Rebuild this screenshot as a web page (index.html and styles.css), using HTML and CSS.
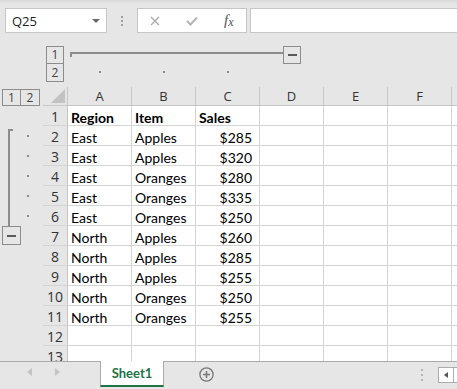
FILE: index.html
```html
<!DOCTYPE html>
<html lang="en">
<head>
    <meta charset="UTF-8">
    <meta name="viewport" content="width=device-width, initial-scale=1.0">
    <title>Sheet1</title>
    <link rel="stylesheet" href="styles.css">
</head>
<body>
<div class="app">

    <div class="toolbar">
        <div class="namebox"><span>Q25</span><span class="caret"></span></div>
        <div class="grip"><i></i><i></i><i></i></div>
        <div class="fxbox">
            <svg width="10" height="10" viewBox="0 0 10 10"><path d="M1 1L9 9M9 1L1 9" stroke="#a8a8a8" stroke-width="1.3" fill="none"/></svg>
            <svg width="12" height="10" viewBox="0 0 12 10"><path d="M1 5L4.5 8.5L11 1.5" stroke="#b4b4b4" stroke-width="2" fill="none"/></svg>
            <span class="fx">f<span class="fx-x">x</span></span>
        </div>
        <div class="formula"></div>
    </div>

    <div class="outline-top">
        <div class="lvl top1">1</div>
        <div class="lvl top2">2</div>
        <div class="bar"><span class="line"></span><span class="collapse"><i></i></span></div>
        <span class="dot ca"></span>
        <span class="dot cb"></span>
        <span class="dot cc"></span>
    </div>

    <div class="sheet">
        <div class="row head">
            <div class="ol"><span class="lvl side">1</span><span class="lvl side two">2</span></div>
            <div class="rh corner"><span class="tri"></span></div>
            <div class="ch">A</div><div class="ch">B</div><div class="ch">C</div><div class="ch">D</div><div class="ch">E</div><div class="ch">F</div><div class="ch"></div>
        </div>
        <div class="row bold">
            <div class="ol"></div><div class="rh">1</div>
            <div class="c">Region</div><div class="c">Item</div><div class="c">Sales</div><div class="c"></div><div class="c"></div><div class="c"></div><div class="c"></div>
        </div>
        <div class="row">
            <div class="ol"><span class="brk first"></span><span class="dot"></span></div><div class="rh">2</div>
            <div class="c">East</div><div class="c">Apples</div><div class="c num">$285</div><div class="c"></div><div class="c"></div><div class="c"></div><div class="c"></div>
        </div>
        <div class="row">
            <div class="ol"><span class="brk"></span><span class="dot"></span></div><div class="rh">3</div>
            <div class="c">East</div><div class="c">Apples</div><div class="c num">$320</div><div class="c"></div><div class="c"></div><div class="c"></div><div class="c"></div>
        </div>
        <div class="row">
            <div class="ol"><span class="brk"></span><span class="dot"></span></div><div class="rh">4</div>
            <div class="c">East</div><div class="c">Oranges</div><div class="c num">$280</div><div class="c"></div><div class="c"></div><div class="c"></div><div class="c"></div>
        </div>
        <div class="row">
            <div class="ol"><span class="brk"></span><span class="dot"></span></div><div class="rh">5</div>
            <div class="c">East</div><div class="c">Oranges</div><div class="c num">$335</div><div class="c"></div><div class="c"></div><div class="c"></div><div class="c"></div>
        </div>
        <div class="row">
            <div class="ol"><span class="brk"></span><span class="dot"></span></div><div class="rh">6</div>
            <div class="c">East</div><div class="c">Oranges</div><div class="c num">$250</div><div class="c"></div><div class="c"></div><div class="c"></div><div class="c"></div>
        </div>
        <div class="row">
            <div class="ol"><span class="collapse side"><i></i></span></div><div class="rh">7</div>
            <div class="c">North</div><div class="c">Apples</div><div class="c num">$260</div><div class="c"></div><div class="c"></div><div class="c"></div><div class="c"></div>
        </div>
        <div class="row">
            <div class="ol"></div><div class="rh">8</div>
            <div class="c">North</div><div class="c">Apples</div><div class="c num">$285</div><div class="c"></div><div class="c"></div><div class="c"></div><div class="c"></div>
        </div>
        <div class="row">
            <div class="ol"></div><div class="rh">9</div>
            <div class="c">North</div><div class="c">Apples</div><div class="c num">$255</div><div class="c"></div><div class="c"></div><div class="c"></div><div class="c"></div>
        </div>
        <div class="row">
            <div class="ol"></div><div class="rh">10</div>
            <div class="c">North</div><div class="c">Oranges</div><div class="c num">$250</div><div class="c"></div><div class="c"></div><div class="c"></div><div class="c"></div>
        </div>
        <div class="row">
            <div class="ol"></div><div class="rh">11</div>
            <div class="c">North</div><div class="c">Oranges</div><div class="c num">$255</div><div class="c"></div><div class="c"></div><div class="c"></div><div class="c"></div>
        </div>
        <div class="row">
            <div class="ol"></div><div class="rh">12</div>
            <div class="c"></div><div class="c"></div><div class="c"></div><div class="c"></div><div class="c"></div><div class="c"></div><div class="c"></div>
        </div>
        <div class="row">
            <div class="ol"></div><div class="rh">13</div>
            <div class="c"></div><div class="c"></div><div class="c"></div><div class="c"></div><div class="c"></div><div class="c"></div><div class="c"></div>
        </div>
    </div>

    <div class="tabs">
        <div class="nav"><span class="arr left"></span><span class="arr right"></span></div>
        <div class="tab">Sheet1</div>
        <svg class="add" width="15" height="15" viewBox="0 0 15 15">
            <circle cx="7.5" cy="7.5" r="6.6" stroke="#767676" stroke-width="1.3" fill="none"/>
            <path d="M7.5 4v7M4 7.5h7" stroke="#767676" stroke-width="1.5"/>
        </svg>
        <div class="grip dim"><i></i><i></i><i></i></div>
        <div class="sbtn"><span class="arr back"></span></div>
        <div class="sbtn next"></div>
    </div>

</div>
</body>
</html>
```

FILE: styles.css
```css
*{
    margin: 0;
    padding: 0;
    box-sizing: border-box;
}

body{
    background-color: #e6e6e6;
    font-family: "Open Sans", "Liberation Sans", sans-serif;
    overflow: hidden;
}

.app{
    width: 457px;
    height: 389px;
    display: flex;
    flex-direction: column;
    overflow: hidden;
}

/* formula bar */
.toolbar{
    height: 40px;
    flex: none;
    display: flex;
    align-items: flex-start;
    padding: 8px 0 0 5px;
    background: linear-gradient(#d9d9d9, #e6e6e6 4px);
}

.namebox{
    width: 102px;
    height: 25px;
    flex: none;
    display: flex;
    align-items: center;
    justify-content: space-between;
    padding: 0 6px 0 6px;
    background-color: #fff;
    border: 1px solid #c6c6c6;
    font-size: 13px;
    color: #222;
}

.caret{
    width: 0;
    height: 0;
    border-left: 4px solid transparent;
    border-right: 4px solid transparent;
    border-top: 4px solid #6a6a6a;
}

.grip{
    width: 30px;
    height: 25px;
    flex: none;
    display: flex;
    flex-direction: column;
    align-items: center;
    justify-content: center;
    gap: 2px;
}

.grip i{
    display: block;
    width: 2px;
    height: 2px;
    background-color: #a0a0a0;
}

.fxbox{
    width: 110px;
    height: 25px;
    flex: none;
    display: flex;
    align-items: center;
    gap: 26px;
    padding-left: 12px;
    background-color: #fff;
    border: 1px solid #c6c6c6;
}

.fx{
    font-family: "Liberation Serif", serif;
    font-style: italic;
    font-size: 15px;
    color: #555;
    line-height: 1;
}

.fx-x{
    font-size: 12px;
    position: relative;
    top: 1px;
}

.formula{
    flex: 1;
    height: 25px;
    margin-left: 3px;
    background-color: #fff;
    border: 1px solid #c6c6c6;
    border-right: none;
}

/* outline above the columns */
.outline-top{
    height: 47px;
    flex: none;
    display: grid;
    grid-template-columns: 43px 25px repeat(7, 64px);
    grid-template-rows: 18px 18px;
    padding-top: 6px;
}

.lvl{
    display: flex;
    align-items: center;
    justify-content: center;
    border: 1px solid #8c8c8c;
    font-size: 12px;
    color: #444;
    line-height: 1;
}

.top1{
    grid-column: 2;
    grid-row: 1;
    width: 18px;
    margin-left: 3px;
}

.top2{
    grid-column: 2;
    grid-row: 2;
    width: 18px;
    margin-left: 3px;
    border-top: none;
}

.bar{
    grid-column: 3 / 7;
    grid-row: 1;
    display: flex;
    align-items: flex-start;
}

.line{
    width: 213px;
    height: 5px;
    margin: 6px 0 0 2px;
    border-top: 2px solid #8c8c8c;
    border-left: 2px solid #8c8c8c;
}

.collapse{
    width: 18px;
    height: 18px;
    flex: none;
    display: flex;
    align-items: center;
    justify-content: center;
    border: 1px solid #8c8c8c;
}

.collapse i{
    display: block;
    width: 9px;
    height: 2px;
    background-color: #595959;
}

.dot{
    display: block;
    width: 2px;
    height: 2px;
    background-color: #8c8c8c;
}

.outline-top .dot{
    grid-row: 2;
    justify-self: center;
    align-self: start;
    margin-top: 7px;
}

.ca{ grid-column: 3; }
.cb{ grid-column: 4; }
.cc{ grid-column: 5; }

/* grid */
.sheet{
    height: 274px;
    flex: none;
    overflow: hidden;
}

.row{
    display: grid;
    grid-template-columns: 43px 25px repeat(7, 64px);
    height: 20px;
}

.row.head{
    height: 19px;
}

.ol{
    display: flex;
    align-items: center;
}

.side{
    width: 19px;
    height: 17px;
    margin-top: 2px;
    align-self: flex-start;
}

.lvl.side{
    margin-left: 2px;
}

.lvl.two{
    margin-left: 0;
    border-left: none;
}

.collapse.side{
    margin-left: 2px;
    margin-top: 0;
    height: 19px;
}

.brk{
    width: 5px;
    align-self: stretch;
    margin-left: 8px;
    border-left: 2px solid #8c8c8c;
}

.brk.first{
    margin-top: 3px;
    border-top: 2px solid #8c8c8c;
}

.ol .dot{
    margin-left: 14px;
}

.rh{
    border-right: 1px solid #c6c6c6;
    border-bottom: 1px solid #d4d4d4;
    text-align: center;
    font-size: 14px;
    color: #333;
    padding-top: 3px;
    line-height: 16px;
}

.corner{
    display: flex;
    align-items: flex-end;
    justify-content: flex-end;
    padding: 0 2px 2px 0;
    border-bottom: 1px solid #c6c6c6;
}

.tri{
    width: 0;
    height: 0;
    border-left: 14px solid transparent;
    border-bottom: 14px solid #c2c2c2;
}

.ch{
    border-right: 1px solid #c6c6c6;
    border-bottom: 1px solid #c6c6c6;
    text-align: center;
    font-size: 13px;
    color: #333;
    padding-top: 2px;
    line-height: 15px;
}

.c{
    background-color: #fff;
    border-right: 1px solid #d4d4d4;
    border-bottom: 1px solid #d4d4d4;
    font-family: Lato, "Liberation Sans", sans-serif;
    font-size: 14px;
    color: #000;
    padding: 4px 3px 0 3px;
    line-height: 15px;
    white-space: nowrap;
    overflow: hidden;
}

.bold .c{
    font-weight: bold;
}

.c.num{
    text-align: right;
    padding-right: 7px;
}

/* sheet tabs */
.tabs{
    height: 28px;
    flex: none;
    display: flex;
    align-items: flex-start;
    border-top: 1px solid #ababab;
}

.nav{
    width: 100px;
    flex: none;
    display: flex;
    align-items: center;
    height: 20px;
}

.arr{
    width: 0;
    height: 0;
    border-top: 4px solid transparent;
    border-bottom: 4px solid transparent;
}

.arr.left{
    margin-left: 27px;
    border-right: 5px solid #c4c4c4;
}

.arr.right{
    margin-left: 23px;
    border-left: 5px solid #c4c4c4;
}

.tab{
    width: 64px;
    height: 26px;
    flex: none;
    margin-top: -1px;
    background-color: #fff;
    border-left: 1px solid #ababab;
    border-right: 1px solid #ababab;
    border-bottom: 2px solid #217346;
    text-align: center;
    font-family: Lato, "Liberation Sans", sans-serif;
    font-weight: bold;
    font-size: 13px;
    color: #217346;
    line-height: 24px;
}

.add{
    flex: none;
    margin: 5px 0 0 35px;
}

.grip.dim{
    width: 2px;
    height: 12px;
    margin: 7px 0 0 207px;
    gap: 3px;
}

.grip.dim i{
    background-color: #b4b4b4;
}

.sbtn{
    width: 16px;
    height: 16px;
    flex: none;
    margin: 5px 0 0 15px;
    display: flex;
    align-items: center;
    justify-content: center;
    background-color: #fff;
    border: 1px solid #ababab;
}

.sbtn.next{
    width: 20px;
    margin-left: 0;
    border-left: none;
}

.arr.back{
    border-top-width: 3px;
    border-bottom-width: 3px;
    border-right: 4px solid #555;
}
```
